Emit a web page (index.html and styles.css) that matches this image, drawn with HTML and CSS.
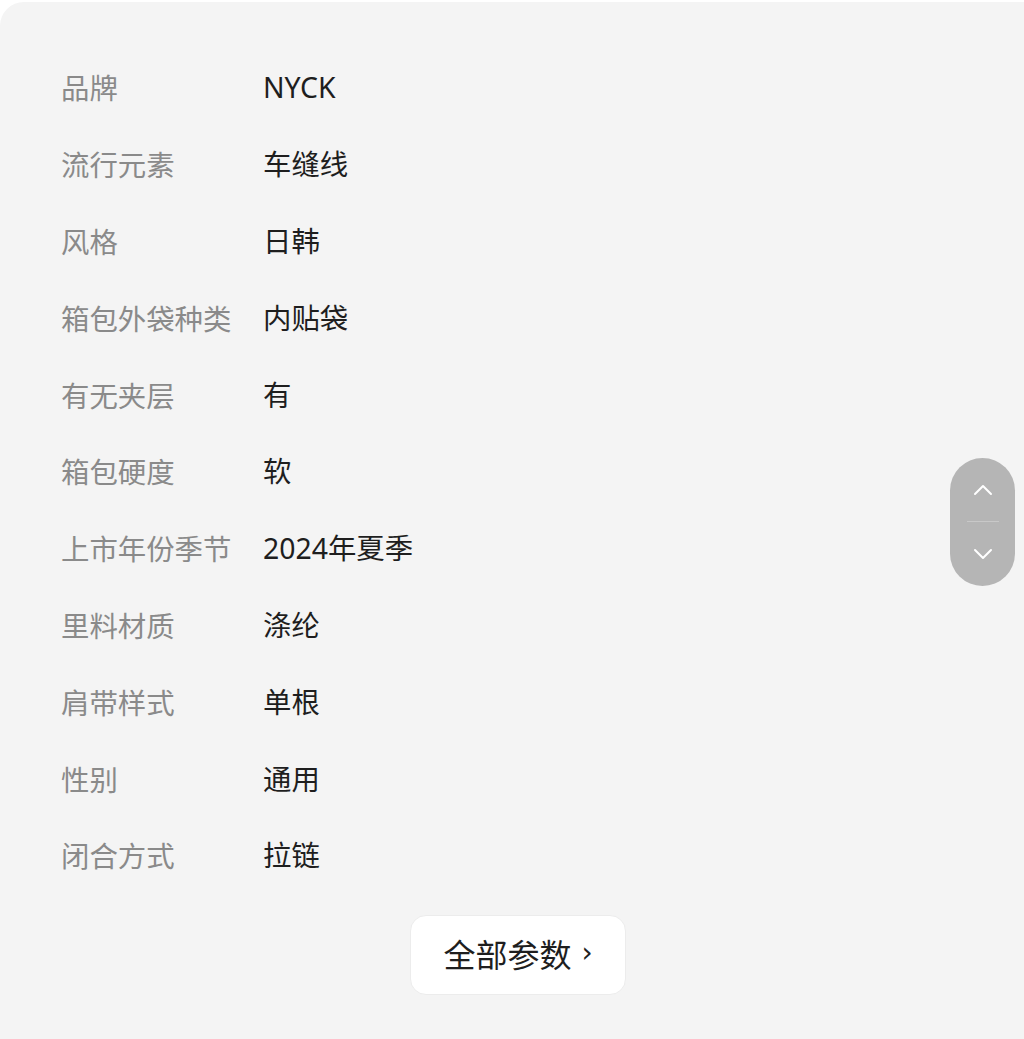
FILE: index.html
```html
<!DOCTYPE html>
<html lang="zh-CN">
<head>
    <meta charset="UTF-8">
    <meta name="viewport" content="width=device-width, initial-scale=1.0">
    <title>商品参数</title>
    <link rel="stylesheet" href="styles.css">
</head>
<body>

    <!-- 参数卡片 -->
    <div class="card">
        <div class="params">
            <div class="row"><span class="label">品牌</span><span class="value">NYCK</span></div>
            <div class="row"><span class="label">流行元素</span><span class="value">车缝线</span></div>
            <div class="row"><span class="label">风格</span><span class="value">日韩</span></div>
            <div class="row"><span class="label">箱包外袋种类</span><span class="value">内贴袋</span></div>
            <div class="row"><span class="label">有无夹层</span><span class="value">有</span></div>
            <div class="row"><span class="label">箱包硬度</span><span class="value">软</span></div>
            <div class="row"><span class="label">上市年份季节</span><span class="value">2024年夏季</span></div>
            <div class="row"><span class="label">里料材质</span><span class="value">涤纶</span></div>
            <div class="row"><span class="label">肩带样式</span><span class="value">单根</span></div>
            <div class="row"><span class="label">性别</span><span class="value">通用</span></div>
            <div class="row"><span class="label">闭合方式</span><span class="value">拉链</span></div>
        </div>

        <div class="more-wrap">
            <button class="more">全部参数<span class="arrow">›</span></button>
        </div>
    </div>

    <!-- 右侧上下翻页按钮 -->
    <div class="pager">
        <button class="pager-btn" aria-label="上一页">
            <svg width="20" height="12" viewBox="0 0 20 12"><path d="M2 10 L10 2 L18 10" fill="none" stroke="#fff" stroke-width="2" stroke-linecap="round" stroke-linejoin="round"/></svg>
        </button>
        <div class="pager-line"></div>
        <button class="pager-btn" aria-label="下一页">
            <svg width="20" height="12" viewBox="0 0 20 12"><path d="M2 2 L10 10 L18 2" fill="none" stroke="#fff" stroke-width="2" stroke-linecap="round" stroke-linejoin="round"/></svg>
        </button>
    </div>

</body>
</html>
```

FILE: styles.css
```css
body {
    margin: 0;
    background: #fff;
    font-family: "Noto Sans", "Noto Sans CJK SC", sans-serif;
}
.card {
    margin-top: 2px;
    background: #f4f4f4;
    border-top-left-radius: 24px;
    padding: 47px 0 40px 61px;
    min-height: calc(100vh - 2px);
    box-sizing: border-box;
}
.row {
    display: flex;
    align-items: center;
    height: 76.8px;
    font-size: 28.4px;
    line-height: 36px;
}
.label {
    width: 202px;
    color: #8a8a8a;
    font-family: "Noto Sans CJK SC", sans-serif;
}
.value {
    color: #1e1e1e;
}
.more-wrap {
    display: flex;
    justify-content: center;
    padding-top: 21px;
    padding-right: 49px;
}
.more {
    width: 216px;
    height: 80px;
    background: #fff;
    border: 1px solid #ececec;
    border-radius: 16px;
    font-family: "Noto Sans CJK SC", sans-serif;
    font-size: 32px;
    color: #1e1e1e;
    display: flex;
    align-items: center;
    justify-content: center;
    padding: 0 0 4px 0;
    cursor: pointer;
}
.arrow {
    font-family: "DejaVu Sans", sans-serif;
    font-size: 28px;
    margin-left: 10px;
}
/* 悬浮翻页按钮 */
.pager {
    position: absolute;
    left: 950px;
    top: 458px;
    width: 65px;
    height: 128px;
    background: #b5b5b5;
    border-radius: 33px;
    display: flex;
    flex-direction: column;
    align-items: center;
}
.pager-btn {
    background: none;
    border: 0;
    height: 63px;
    display: flex;
    align-items: center;
    justify-content: center;
    padding: 0;
}
.pager-line {
    width: 32px;
    height: 1px;
    background: #c8c8c8;
}
```
